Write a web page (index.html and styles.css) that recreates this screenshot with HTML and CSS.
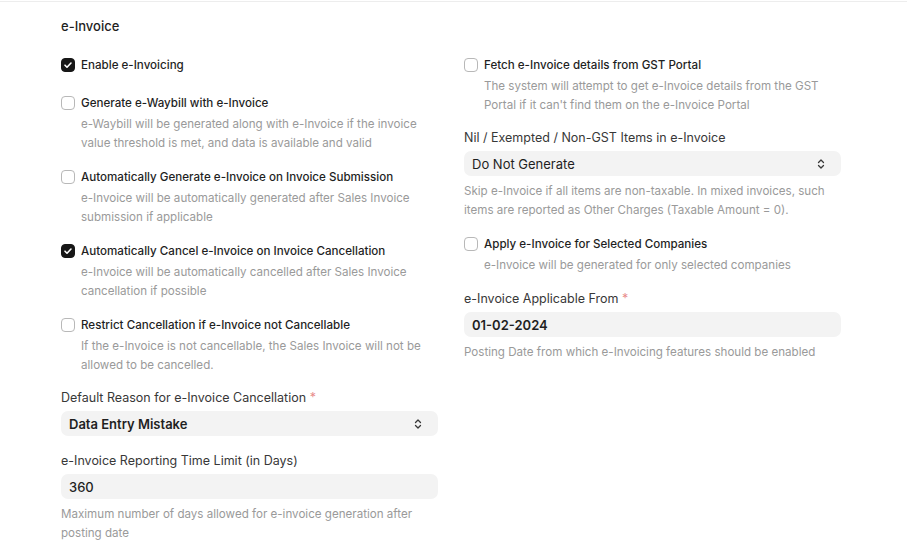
FILE: index.html
```html
<!DOCTYPE html>
<html>
<head>
<meta charset="utf-8">
<link rel="stylesheet" href="styles.css">
</head>
<body>
<div class="page">
  <div class="section">
    <div class="section-title">e-Invoice</div>
    <div class="columns">
      <div class="col">
        <div class="check-control first">
          <div class="check-row"><span class="cb checked"><svg width="14" height="14" viewBox="0 0 14 14"><path d="M4 7.2 L6 9.2 L10 5" fill="none" stroke="#fff" stroke-width="1.6" stroke-linecap="round" stroke-linejoin="round"/></svg></span><span class="check-label">Enable e-Invoicing</span></div>
        </div>
        <div class="check-control">
          <div class="check-row"><span class="cb"></span><span class="check-label">Generate e-Waybill with e-Invoice</span></div>
          <div class="help indent">e-Waybill will be generated along with e-Invoice if the invoice value threshold is met, and data is available and valid</div>
        </div>
        <div class="check-control">
          <div class="check-row"><span class="cb"></span><span class="check-label">Automatically Generate e-Invoice on Invoice Submission</span></div>
          <div class="help indent">e-Invoice will be automatically generated after Sales Invoice submission if applicable</div>
        </div>
        <div class="check-control">
          <div class="check-row"><span class="cb checked"><svg width="14" height="14" viewBox="0 0 14 14"><path d="M4 7.2 L6 9.2 L10 5" fill="none" stroke="#fff" stroke-width="1.6" stroke-linecap="round" stroke-linejoin="round"/></svg></span><span class="check-label">Automatically Cancel e-Invoice on Invoice Cancellation</span></div>
          <div class="help indent">e-Invoice will be automatically cancelled after Sales Invoice cancellation if possible</div>
        </div>
        <div class="check-control">
          <div class="check-row"><span class="cb"></span><span class="check-label">Restrict Cancellation if e-Invoice not Cancellable</span></div>
          <div class="help indent">If the e-Invoice is not cancellable, the Sales Invoice will not be allowed to be cancelled.</div>
        </div>
        <div class="field">
          <div class="field-label">Default Reason for e-Invoice Cancellation <span class="req">*</span></div>
          <div class="input select"><span class="value strong">Data Entry Mistake</span><svg class="arrows" width="8" height="12" viewBox="0 0 8 12"><path d="M1.5 4.5 L4 2 L6.5 4.5 M1.5 7.5 L4 10 L6.5 7.5" fill="none" stroke="#383838" stroke-width="1.3" stroke-linecap="round" stroke-linejoin="round"/></svg></div>
        </div>
        <div class="field">
          <div class="field-label">e-Invoice Reporting Time Limit (in Days)</div>
          <div class="input"><span class="value medium">360</span></div>
          <div class="help after-input">Maximum number of days allowed for e-invoice generation after posting date</div>
        </div>
      </div>
      <div class="col">
        <div class="check-control">
          <div class="check-row"><span class="cb"></span><span class="check-label">Fetch e-Invoice details from GST Portal</span></div>
          <div class="help indent">The system will attempt to get e-Invoice details from the GST Portal if it can't find them on the e-Invoice Portal</div>
        </div>
        <div class="field compact">
          <div class="field-label">Nil / Exempted / Non-GST Items in e-Invoice</div>
          <div class="input select"><span class="value">Do Not Generate</span><svg class="arrows" width="8" height="12" viewBox="0 0 8 12"><path d="M1.5 4.5 L4 2 L6.5 4.5 M1.5 7.5 L4 10 L6.5 7.5" fill="none" stroke="#383838" stroke-width="1.3" stroke-linecap="round" stroke-linejoin="round"/></svg></div>
          <div class="help after-input">Skip e-Invoice if all items are non-taxable. In mixed invoices, such items are reported as Other Charges (Taxable Amount = 0).</div>
        </div>
        <div class="check-control loose">
          <div class="check-row"><span class="cb"></span><span class="check-label">Apply e-Invoice for Selected Companies</span></div>
          <div class="help indent">e-Invoice will be generated for only selected companies</div>
        </div>
        <div class="field">
          <div class="field-label">e-Invoice Applicable From <span class="req">*</span></div>
          <div class="input"><span class="value strong">01-02-2024</span></div>
          <div class="help after-input">Posting Date from which e-Invoicing features should be enabled</div>
        </div>
      </div>
    </div>
  </div>
</div>
</body>
</html>
```

FILE: styles.css
```css
* { box-sizing: border-box; }
html, body { margin: 0; padding: 0; background: #fff; }
body {
  font-family: Inter, "Noto Sans", sans-serif;
  color: #383838;
  -webkit-font-smoothing: antialiased;
}
.page {
  margin-top: 1px;
  border-top: 1px solid #ededed;
}
.section {
  padding: 14px 0 0 61px;
  width: 841px;
}
.section-title {
  font-size: 13px;
  line-height: 20px;
  font-weight: 500;
  color: #1f1f1f;
  margin-bottom: 19px;
}
.columns {
  display: grid;
  grid-template-columns: 377px 377px;
  column-gap: 26px;
  align-items: start;
}
.col { display: flex; flex-direction: column; }
.check-control { margin-bottom: 14px; }
.check-control.first { margin-bottom: 18px; }
.check-control.loose { margin-bottom: 15px; }
.check-row {
  display: flex;
  align-items: center;
  height: 20px;
}
.cb {
  width: 14px;
  height: 14px;
  border: 1px solid #b8b8b8;
  border-radius: 4px;
  margin-right: 6px;
  flex: none;
  display: flex;
  align-items: center;
  justify-content: center;
  background: #fff;
}
.cb.checked {
  background: #171717;
  border-color: #171717;
}
.cb svg { display: block; flex: none; }
.check-label {
  font-size: 11.6px;
  font-weight: 500;
  color: #1f1f1f;
}
.help {
  font-size: 11.6px;
  line-height: 19px;
  color: #9a9a9a;
}
.help.indent { margin-left: 20px; margin-top: 2px; }
.help.after-input { margin-top: 6px; }
.field { margin-bottom: 16px; }
.field.compact { margin-bottom: 14px; }
.field-label {
  font-size: 12.5px;
  line-height: 18px;
  color: #383838;
  margin-bottom: 4px;
}
.req { color: #e88b8b; }
.input {
  height: 25px;
  background: #f3f3f3;
  border-radius: 7px;
  display: flex;
  align-items: center;
  padding: 0 16px 0 8px;
  justify-content: space-between;
}
.value {
  font-size: 13px;
  color: #1f1f1f;
}
.value.strong { font-weight: 600; }
.value.medium { font-weight: 500; }
.arrows { display: block; }
```
